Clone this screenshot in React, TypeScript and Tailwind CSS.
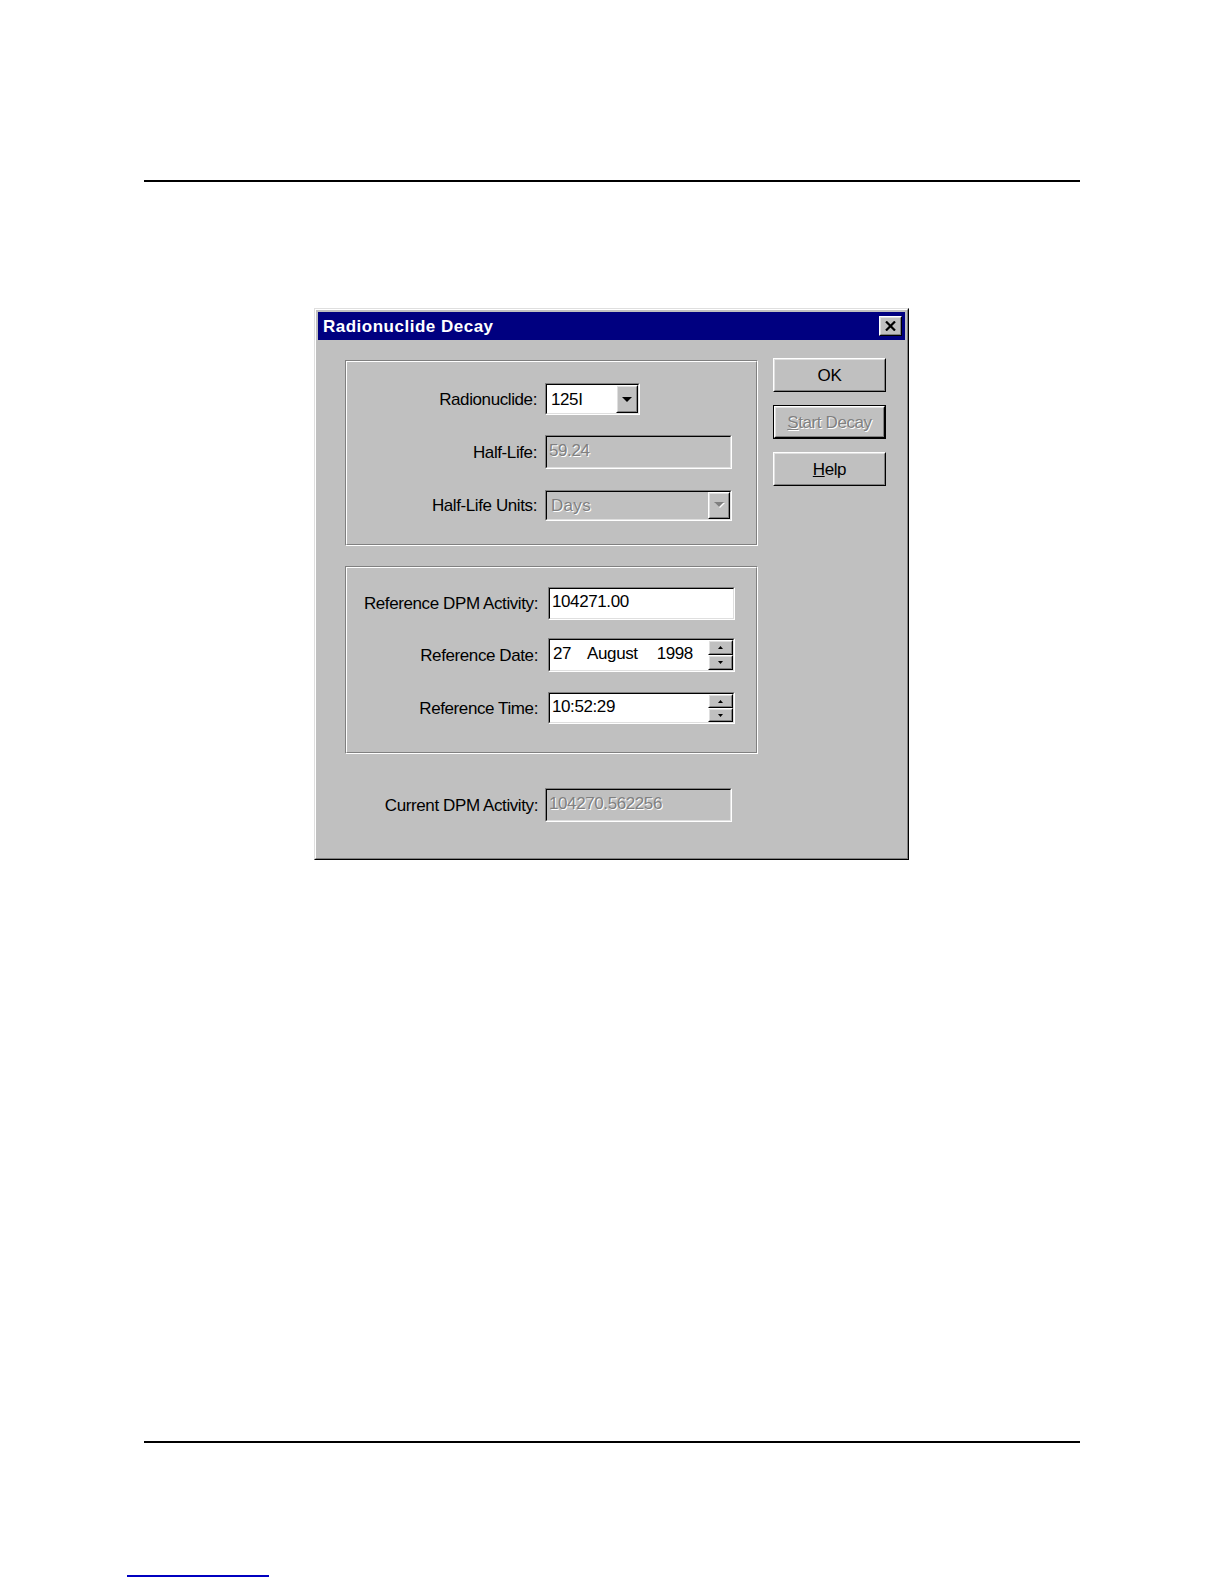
import React from "react";

type BoxProps = { className?: string; innerClassName?: string; children?: React.ReactNode };

function Raised({ className = "", innerClassName = "", children }: BoxProps) {
  return (
    <div className={"border border-t-white border-l-white border-r-black border-b-black bg-[#c0c0c0] " + className}>
      <div className={"h-full w-full border border-t-[#dfdfdf] border-l-[#dfdfdf] border-r-[#808080] border-b-[#808080] " + innerClassName}>
        {children}
      </div>
    </div>
  );
}

function Sunken({ className = "", innerClassName = "", children }: BoxProps) {
  return (
    <div className={"border border-t-[#808080] border-l-[#808080] border-r-white border-b-white " + className}>
      <div className={"h-full w-full border border-t-black border-l-black border-r-[#dfdfdf] border-b-[#dfdfdf] " + innerClassName}>
        {children}
      </div>
    </div>
  );
}

function Etched({ className = "", children }: BoxProps) {
  return (
    <div className={"border border-t-[#808080] border-l-[#808080] border-r-white border-b-white " + className}>
      <div className="h-full w-full border border-t-white border-l-white border-r-[#808080] border-b-[#808080]">
        {children}
      </div>
    </div>
  );
}

function DownArrow({ disabled = false }: { disabled?: boolean }) {
  if (disabled) {
    return (
      <svg width="11" height="7" viewBox="0 0 11 7">
        <polygon points="1,1 11,1 6,6" fill="#ffffff" />
        <polygon points="0,0 10,0 5,5" fill="#808080" />
      </svg>
    );
  }
  return (
    <svg width="10" height="5" viewBox="0 0 10 5">
      <polygon points="0,0 10,0 5,5" fill="#000000" />
    </svg>
  );
}

function SmallTri({ up }: { up: boolean }) {
  return (
    <svg width="5" height="3" viewBox="0 0 5 3">
      {up ? <polygon points="2.5,0 5,3 0,3" fill="#000" /> : <polygon points="0,0 5,0 2.5,3" fill="#000" />}
    </svg>
  );
}

function Spinner() {
  return (
    <div className="w-[25px] h-full flex flex-col">
      <Raised className="h-1/2 w-full" innerClassName="flex items-center justify-center">
        <SmallTri up />
      </Raised>
      <Raised className="h-1/2 w-full" innerClassName="flex items-center justify-center">
        <SmallTri up={false} />
      </Raised>
    </div>
  );
}

const disabledText = "text-[#808080] [text-shadow:1px_1px_0_#ffffff]";

export default function App() {
  return (
    <div className="w-[1224px] h-[1584px] bg-white pt-[180px] font-['Liberation_Sans',Arial,sans-serif] text-black">
      <div className="ml-[144px] w-[936px] h-[2px] bg-black" />

      {/* Dialog */}
      <div className="ml-[314px] mt-[126px] w-[595px] h-[552px] border border-t-[#dfdfdf] border-l-[#dfdfdf] border-r-black border-b-black">
        <div className="h-full w-full border border-t-white border-l-white border-r-[#808080] border-b-[#808080] bg-[#c0c0c0] p-[2px] flex flex-col">
          {/* Title bar */}
          <div className="h-[28px] bg-[#000080] flex items-center justify-between pl-[5px] pr-[3px]">
            <span className="text-white font-bold text-[17px] tracking-[0.5px] leading-none">Radionuclide Decay</span>
            <Raised className="w-[23px] h-[20px]" innerClassName="flex items-center justify-center">
              <svg width="11" height="10" viewBox="0 0 11 10">
                <path d="M1 0.5 L10 9.5 M10 0.5 L1 9.5" stroke="#000" strokeWidth="2.2" />
              </svg>
            </Raised>
          </div>

          {/* Body */}
          <div className="flex pl-[27px] pt-[18px] text-[17px] tracking-[-0.4px] leading-none">
            <div className="w-[413px] pt-[2px] flex flex-col">
              {/* Group 1 */}
              <Etched className="h-[186px]">
                <div className="pt-[21px] flex flex-col">
                  <div className="flex items-center h-[32px]">
                    <div className="w-[190px] text-right">Radionuclide:</div>
                    <Sunken className="ml-[8px] w-[95px] h-[32px]" innerClassName="bg-white flex items-center justify-between">
                      <span className="pl-[4px]">125I</span>
                      <Raised className="w-[22px] h-full" innerClassName="flex items-center justify-center">
                        <DownArrow />
                      </Raised>
                    </Sunken>
                  </div>
                  <div className="flex items-center h-[34px] mt-[20px]">
                    <div className="w-[190px] text-right">Half-Life:</div>
                    <Sunken className="ml-[8px] w-[187px] h-[34px]" innerClassName="bg-[#c0c0c0] flex items-center">
                      <span className={"pl-[2px] pb-[4px] " + disabledText}>59.24</span>
                    </Sunken>
                  </div>
                  <div className="flex items-center h-[31px] mt-[21px]">
                    <div className="w-[190px] text-right">Half-Life Units:</div>
                    <Sunken className="ml-[8px] w-[187px] h-[31px]" innerClassName="bg-[#c0c0c0] flex items-center justify-between">
                      <span className={"pl-[4px] tracking-[0.3px] " + disabledText}>Days</span>
                      <Raised className="w-[22px] h-full" innerClassName="flex items-center justify-center">
                        <DownArrow disabled />
                      </Raised>
                    </Sunken>
                  </div>
                </div>
              </Etched>

              {/* Group 2 */}
              <Etched className="h-[188px] mt-[20px]">
                <div className="pt-[19px] flex flex-col">
                  <div className="flex items-center h-[33px]">
                    <div className="w-[191px] text-right">Reference DPM Activity:</div>
                    <Sunken className="ml-[10px] w-[187px] h-[33px]" innerClassName="bg-white flex items-center">
                      <span className="pl-[2px] pb-[4px]">104271.00</span>
                    </Sunken>
                  </div>
                  <div className="flex items-center h-[34px] mt-[18px]">
                    <div className="w-[191px] text-right">Reference Date:</div>
                    <Sunken className="ml-[10px] w-[187px] h-[34px]" innerClassName="bg-white flex items-center justify-between">
                      <span className="pl-[3px] pb-[4px] flex">
                        <span>27</span>
                        <span className="ml-[16px]">August</span>
                        <span className="ml-[19px]">1998</span>
                      </span>
                      <Spinner />
                    </Sunken>
                  </div>
                  <div className="flex items-center h-[32px] mt-[20px]">
                    <div className="w-[191px] text-right">Reference Time:</div>
                    <Sunken className="ml-[10px] w-[187px] h-[32px]" innerClassName="bg-white flex items-center justify-between">
                      <span className="pl-[2px] pb-[4px]">10:52:29</span>
                      <Spinner />
                    </Sunken>
                  </div>
                </div>
              </Etched>

              {/* Current */}
              <div className="flex items-center h-[34px] mt-[34px]">
                <div className="w-[193px] text-right">Current DPM Activity:</div>
                <Sunken className="ml-[7px] w-[187px] h-[34px]" innerClassName="bg-[#c0c0c0] flex items-center">
                  <span className={"pl-[2px] pb-[4px] " + disabledText}>104270.562256</span>
                </Sunken>
              </div>
            </div>

            {/* Buttons */}
            <div className="ml-[15px] w-[113px] flex flex-col">
              <Raised className="h-[34px]" innerClassName="flex items-center justify-center">
                <span>OK</span>
              </Raised>
              <div className="mt-[13px] h-[34px] border border-black">
                <Raised className="h-full" innerClassName="flex items-center justify-center">
                  <span className={disabledText}>
                    <span className="underline">S</span>tart Decay
                  </span>
                </Raised>
              </div>
              <Raised className="mt-[13px] h-[34px]" innerClassName="flex items-center justify-center">
                <span>
                  <span className="underline">H</span>elp
                </span>
              </Raised>
            </div>
          </div>
        </div>
      </div>

      <div className="ml-[144px] mt-[581px] w-[936px] h-[2px] bg-black" />
      <div className="ml-[127px] mt-[132px] w-[142px] h-[2px] bg-[#0000c0]" />
    </div>
  );
}
